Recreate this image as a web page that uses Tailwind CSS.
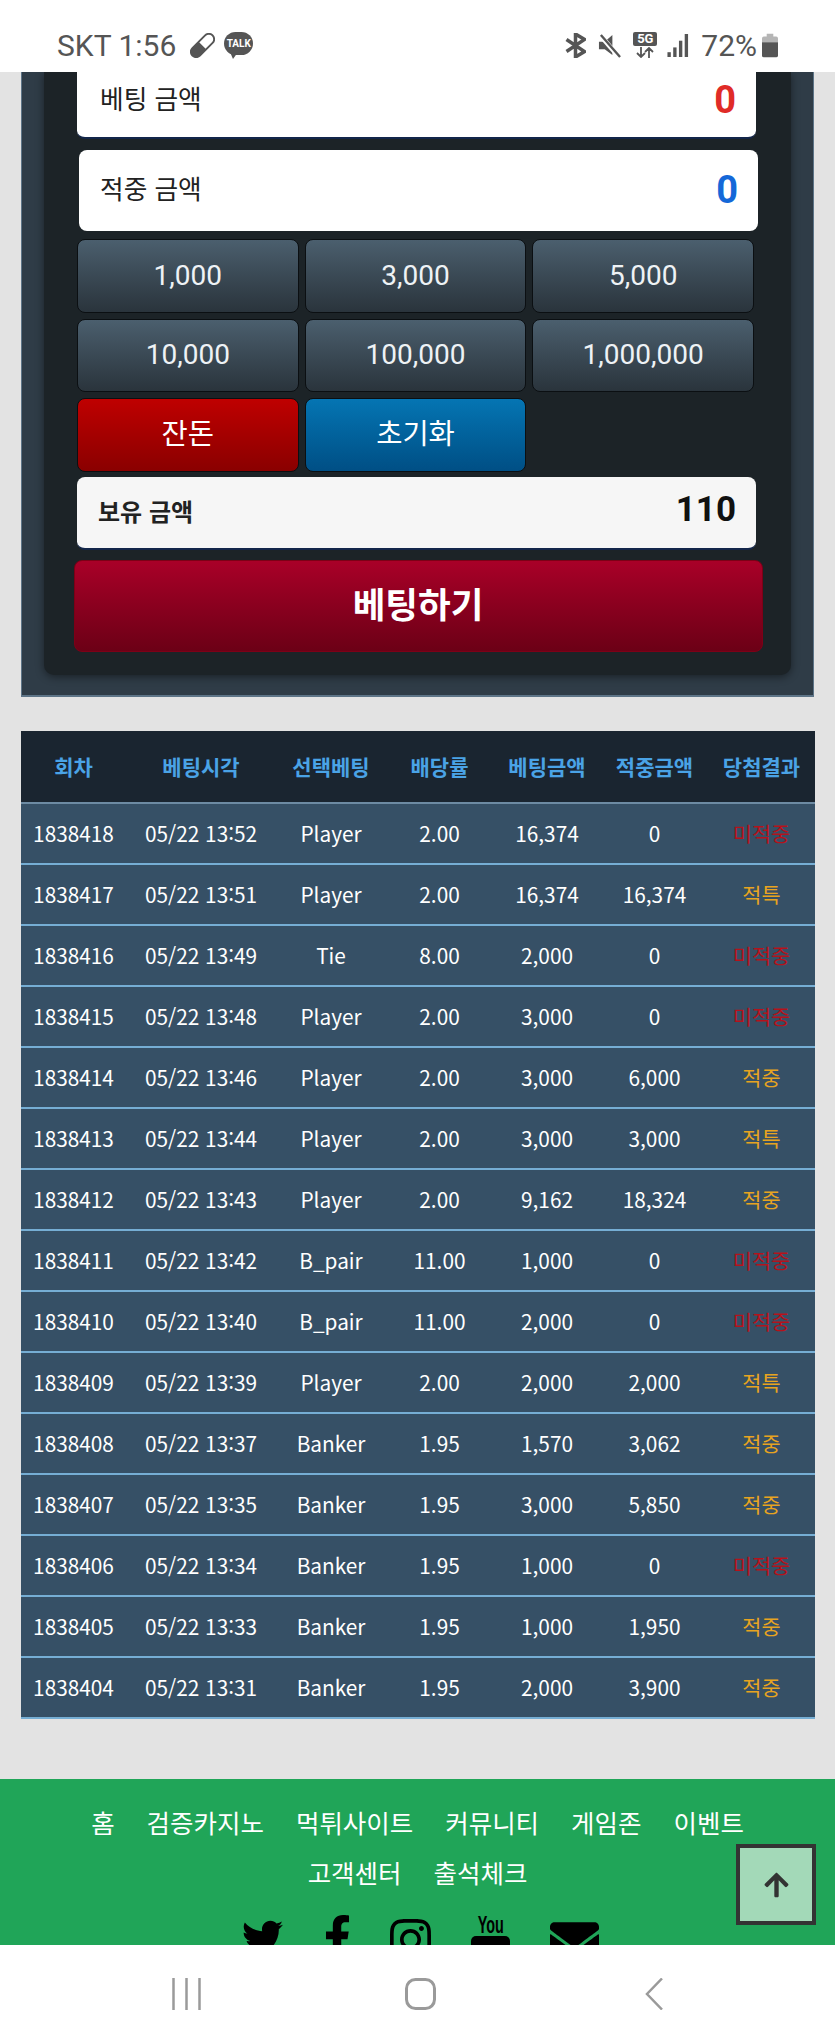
<!DOCTYPE html>
<html lang="ko">
  <head>
    <meta charset="UTF-8" />
    <meta name="viewport" content="width=device-width, initial-scale=1.0" />
    <title>베팅내역</title>
    <script src="https://cdn.jsdelivr.net/npm/@tailwindcss/browser@4"></script>
  </head>
  <body class="bg-[#e3e3e3] font-['Noto_Sans_CJK_KR','Noto_Sans',sans-serif]">
    <div class="relative w-[835px] h-[2042px] flex flex-col overflow-hidden">
      <!-- status bar -->
      <div class="h-[72px] shrink-0 bg-white flex items-center justify-between pl-[57px] pr-[57px] pt-[19px] text-[#555] font-['Roboto',sans-serif] text-[30px]">
        <div class="flex items-center">
          <span class="leading-none">SKT 1:56</span>
          <svg class="ml-[14px]" width="25" height="25" viewBox="0 0 26 26"><path d="M2.500 23.500a5.500 5.500 0 0 1 0-7.800L15.700 2.500a5.500 5.500 0 0 1 7.800 7.800L10.300 23.500a5.500 5.500 0 0 1-7.800 0z" fill="#fff" stroke="#555" stroke-width="2"/><path d="M2.500 23.500a5.500 5.500 0 0 1 0-7.800L9 9.200 16.800 17l-6.500 6.500a5.500 5.500 0 0 1-7.800 0z" fill="#555"/></svg>
          <div class="relative ml-[9px] w-[29px] h-[27px]">
            <div class="w-[29px] h-[23px] rounded-full bg-[#555] text-white text-[10px] leading-[23px] font-bold text-center">TALK</div>
            <div class="absolute left-[6px] top-[20px] w-0 h-0 border-l-[3px] border-r-[5px] border-t-[7px] border-l-transparent border-r-transparent border-t-[#555]"></div>
          </div>
        </div>
        <div class="flex items-center">
          <svg width="21" height="25" viewBox="0 0 21 25" fill="none" stroke="#555" stroke-width="3.500"><path d="M1.500 6.500l18 12-9 5.500V1l9 5.500-18 12"/></svg>
          <svg class="ml-[12px]" width="23" height="24" viewBox="0 0 24 25"><path d="M1 8h6l8-7v21l-8-6H1z" fill="#555"/><path d="M2 1l20 23" stroke="#fff" stroke-width="5"/><path d="M3 1l20 23" stroke="#555" stroke-width="2.500"/></svg>
          <div class="ml-[12px] w-[24px] flex flex-col items-center -mt-[2px]">
            <div class="w-[24px] h-[14px] rounded-[2px] bg-[#555] text-white text-[13px] leading-[14px] font-bold text-center">5G</div>
            <svg class="mt-[1px]" width="20" height="11" viewBox="0 0 20 11" fill="none" stroke="#555" stroke-width="1.800"><path d="M6 0v10M2 6l4 4 4-4M14 11V1M10 5l4-4 4 4"/></svg>
          </div>
          <svg class="ml-[10px]" width="22" height="23" viewBox="0 0 22 24" fill="#555"><rect x="0" y="19" width="3.500" height="5"/><rect x="6" y="14" width="3.500" height="10"/><rect x="12" y="7" width="3.500" height="17"/><rect x="18" y="0" width="3.500" height="24"/></svg>
          <span class="ml-[12px] leading-none">72%</span>
          <svg class="ml-[5px]" width="16" height="25" viewBox="0 0 17 25"><path d="M5 0h7v3h3a2 2 0 0 1 2 2v4H0V5a2 2 0 0 1 2-2h3z" fill="#b5b5b5"/><path d="M0 9h17v14a2 2 0 0 1-2 2H2a2 2 0 0 1-2-2z" fill="#555"/></svg>
        </div>
      </div>

      <main class="flex-1 min-h-0 flex flex-col overflow-hidden">
        <!-- bet panel -->
        <section class="mx-[21px] h-[625px] shrink-0 bg-[#2f3c47] border-x border-b-2 border-[#5d7487] px-[22px]">
          <div class="h-[603px] bg-[#1c2327] rounded-b-[10px] shadow-[0_2px_8px_rgba(0,0,0,0.45)] relative px-[33px]">
            <div class="w-[679px] h-[67px] bg-white rounded-b-[8px] border-b-2 border-[#13264a] flex items-center justify-between pl-[23px] pr-[20px] pb-[13px] text-[#222] text-[25.700px]">
              <span>베팅 금액</span>
              <span class="mt-[3px] text-[#e02b27] font-['Roboto',sans-serif] font-bold text-[38px] leading-none">0</span>
            </div>
            <div class="w-[679px] h-[81px] mt-[11px] ml-[2px] bg-white rounded-[8px] flex items-center justify-between pl-[21px] pr-[20px] pb-[4px] text-[#222] text-[25.700px]">
              <span>적중 금액</span>
              <span class="mt-[3px] text-[#1468d8] font-['Roboto',sans-serif] font-bold text-[38px] leading-none">0</span>
            </div>
            <div class="grid grid-cols-3 gap-[6px] w-[677px] mt-[8px] font-['Roboto',sans-serif] text-[28px] text-[#eef2f5]">
              <button class="h-[73.500px] rounded-[8px] border-[1.500px] border-[#0b0f12] bg-gradient-to-b from-[#4b5f6e] to-[#2a343c]">1,000</button>
              <button class="h-[73.500px] rounded-[8px] border-[1.500px] border-[#0b0f12] bg-gradient-to-b from-[#4b5f6e] to-[#2a343c]">3,000</button>
              <button class="h-[73.500px] rounded-[8px] border-[1.500px] border-[#0b0f12] bg-gradient-to-b from-[#4b5f6e] to-[#2a343c]">5,000</button>
              <button class="h-[73.500px] rounded-[8px] border-[1.500px] border-[#0b0f12] bg-gradient-to-b from-[#4b5f6e] to-[#2a343c]">10,000</button>
              <button class="h-[73.500px] rounded-[8px] border-[1.500px] border-[#0b0f12] bg-gradient-to-b from-[#4b5f6e] to-[#2a343c]">100,000</button>
              <button class="h-[73.500px] rounded-[8px] border-[1.500px] border-[#0b0f12] bg-gradient-to-b from-[#4b5f6e] to-[#2a343c]">1,000,000</button>
              <button class="h-[73.500px] pb-[5px] rounded-[8px] border-[1.500px] border-[#0b0f12] bg-gradient-to-b from-[#bf0000] to-[#8a0000] font-['Noto_Sans_CJK_KR',sans-serif] text-[28.500px] text-white">잔돈</button>
              <button class="h-[73.500px] pb-[5px] rounded-[8px] border-[1.500px] border-[#0b0f12] bg-gradient-to-b from-[#0575b3] to-[#004f85] font-['Noto_Sans_CJK_KR',sans-serif] text-[28.500px] text-white">초기화</button>
            </div>
            <div class="w-[679px] h-[73px] mt-[5px] bg-[#f6f6f6] rounded-[8px] border-b-2 border-[#13264a] flex items-center justify-between pl-[21px] pr-[20px] pb-[3px]">
              <span class="text-[#222] text-[24px] font-bold">보유 금액</span>
              <span class="mb-[2px] text-[#111] font-['Roboto',sans-serif] font-bold text-[35px] leading-none">110</span>
            </div>
            <button class="block -ml-[3.500px] w-[689px] h-[92px] mt-[10.500px] pb-[6px] rounded-[8px] border border-[#7d0016] bg-gradient-to-b from-[#a90028] to-[#6c0016] text-white font-bold text-[35.500px]">베팅하기</button>
          </div>
        </section>

        <!-- history table -->
        <table class="mt-[34px] ml-[21px] w-[794px] table-fixed shrink-0 text-center text-[20.800px] text-white">
          <colgroup>
            <col class="w-[105px]" /><col class="w-[150px]" /><col class="w-[110px]" /><col class="w-[107px]" /><col class="w-[108px]" /><col class="w-[107px]" /><col class="w-[107px]" />
          </colgroup>
          <thead class="bg-[#1a2530] text-[#4aa3e6] text-[21px]">
            <tr class="h-[72px] border-b-2 border-[#6d8ba3]">
              <th>회차</th><th>베팅시각</th><th>선택베팅</th><th>배당률</th><th>베팅금액</th><th>적중금액</th><th>당첨결과</th>
            </tr>
          </thead>
          <tbody class="bg-[#365066]">
            <tr class="h-[61px] border-b-2 border-[#76aed4]"><td>1838418</td><td>05/22 13:52</td><td>Player</td><td>2.00</td><td>16,374</td><td>0</td><td class="text-[#b5121b]">미적중</td></tr>
            <tr class="h-[61px] border-b-2 border-[#76aed4]"><td>1838417</td><td>05/22 13:51</td><td>Player</td><td>2.00</td><td>16,374</td><td>16,374</td><td class="text-[#e8a420]">적특</td></tr>
            <tr class="h-[61px] border-b-2 border-[#76aed4]"><td>1838416</td><td>05/22 13:49</td><td>Tie</td><td>8.00</td><td>2,000</td><td>0</td><td class="text-[#b5121b]">미적중</td></tr>
            <tr class="h-[61px] border-b-2 border-[#76aed4]"><td>1838415</td><td>05/22 13:48</td><td>Player</td><td>2.00</td><td>3,000</td><td>0</td><td class="text-[#b5121b]">미적중</td></tr>
            <tr class="h-[61px] border-b-2 border-[#76aed4]"><td>1838414</td><td>05/22 13:46</td><td>Player</td><td>2.00</td><td>3,000</td><td>6,000</td><td class="text-[#e8a420]">적중</td></tr>
            <tr class="h-[61px] border-b-2 border-[#76aed4]"><td>1838413</td><td>05/22 13:44</td><td>Player</td><td>2.00</td><td>3,000</td><td>3,000</td><td class="text-[#e8a420]">적특</td></tr>
            <tr class="h-[61px] border-b-2 border-[#76aed4]"><td>1838412</td><td>05/22 13:43</td><td>Player</td><td>2.00</td><td>9,162</td><td>18,324</td><td class="text-[#e8a420]">적중</td></tr>
            <tr class="h-[61px] border-b-2 border-[#76aed4]"><td>1838411</td><td>05/22 13:42</td><td>B_pair</td><td>11.00</td><td>1,000</td><td>0</td><td class="text-[#b5121b]">미적중</td></tr>
            <tr class="h-[61px] border-b-2 border-[#76aed4]"><td>1838410</td><td>05/22 13:40</td><td>B_pair</td><td>11.00</td><td>2,000</td><td>0</td><td class="text-[#b5121b]">미적중</td></tr>
            <tr class="h-[61px] border-b-2 border-[#76aed4]"><td>1838409</td><td>05/22 13:39</td><td>Player</td><td>2.00</td><td>2,000</td><td>2,000</td><td class="text-[#e8a420]">적특</td></tr>
            <tr class="h-[61px] border-b-2 border-[#76aed4]"><td>1838408</td><td>05/22 13:37</td><td>Banker</td><td>1.95</td><td>1,570</td><td>3,062</td><td class="text-[#e8a420]">적중</td></tr>
            <tr class="h-[61px] border-b-2 border-[#76aed4]"><td>1838407</td><td>05/22 13:35</td><td>Banker</td><td>1.95</td><td>3,000</td><td>5,850</td><td class="text-[#e8a420]">적중</td></tr>
            <tr class="h-[61px] border-b-2 border-[#76aed4]"><td>1838406</td><td>05/22 13:34</td><td>Banker</td><td>1.95</td><td>1,000</td><td>0</td><td class="text-[#b5121b]">미적중</td></tr>
            <tr class="h-[61px] border-b-2 border-[#76aed4]"><td>1838405</td><td>05/22 13:33</td><td>Banker</td><td>1.95</td><td>1,000</td><td>1,950</td><td class="text-[#e8a420]">적중</td></tr>
            <tr class="h-[61px] border-b-2 border-[#76aed4]"><td>1838404</td><td>05/22 13:31</td><td>Banker</td><td>1.95</td><td>2,000</td><td>3,900</td><td class="text-[#e8a420]">적중</td></tr>
          </tbody>
        </table>

        <!-- footer -->
        <footer class="mt-auto h-[166px] shrink-0 overflow-hidden bg-[#20a558] text-white text-[25.500px]">
          <div class="h-[118px] flex flex-wrap justify-center content-start gap-x-[32px] px-[80px] pt-[18px] leading-[50px]">
            <a>홈</a><a>검증카지노</a><a>먹튀사이트</a><a>커뮤니티</a><a>게임존</a><a>이벤트</a><a>고객센터</a><a>출석체크</a>
          </div>
          <div class="flex items-start pl-[242px] mt-[21px]">
            <svg class="mt-[-1px]" width="41" height="41" viewBox="0 0 512 512"><path d="M459.370 151.716c.325 4.548.325 9.097.325 13.645 0 138.720-105.583 298.558-298.558 298.558-59.452 0-114.680-17.219-161.137-47.106 8.447.974 16.568 1.299 25.340 1.299 49.055 0 94.213-16.568 130.274-44.832-46.132-.975-84.792-31.188-98.112-72.772 6.498.974 12.995 1.624 19.818 1.624 9.421 0 18.843-1.300 27.614-3.573-48.081-9.747-84.143-51.980-84.143-102.985v-1.299c13.969 7.797 30.214 12.670 47.431 13.319-28.264-18.843-46.781-51.005-46.781-87.391 0-19.492 5.197-37.360 14.294-52.954 51.655 63.675 129.300 105.258 216.365 109.807-1.624-7.797-2.599-15.918-2.599-24.040 0-57.828 46.782-104.934 104.934-104.934 30.213 0 57.502 12.670 76.670 33.137 23.715-4.548 46.456-13.320 66.599-25.340-7.798 24.366-24.366 44.833-46.132 57.827 21.117-2.273 41.584-8.122 60.426-16.243-14.292 20.791-32.161 39.308-52.628 54.253z"/></svg>
            <svg class="ml-[41px] mt-[-3px]" width="27" height="43" viewBox="0 0 320 512"><path d="M279.140 288l14.220-92.660h-88.910v-60.130c0-25.350 12.420-50.060 52.240-50.060h40.420V6.260S260.430 0 225.360 0c-73.220 0-121.080 44.380-121.080 124.720v70.620H22.890V288h81.390v224h100.170V288z"/></svg>
            <svg class="ml-[39px] mt-[-2px]" width="41" height="47" viewBox="0 0 448 512"><path d="M224.100 141c-63.600 0-114.900 51.300-114.900 114.900s51.300 114.900 114.900 114.900S339 319.500 339 255.900 287.700 141 224.100 141zm0 189.600c-41.100 0-74.700-33.500-74.700-74.700s33.500-74.700 74.700-74.700 74.700 33.500 74.700 74.700-33.600 74.700-74.700 74.700zm146.400-194.300c0 14.900-12 26.800-26.800 26.800-14.900 0-26.800-12-26.800-26.800s12-26.800 26.800-26.800 26.800 12 26.800 26.800zm76.100 27.200c-1.700-35.900-9.900-67.700-36.200-93.900-26.200-26.200-58-34.400-93.900-36.200-37-2.100-147.900-2.100-184.900 0-35.800 1.700-67.600 9.900-93.900 36.100s-34.400 58-36.200 93.900c-2.100 37-2.100 147.900 0 184.900 1.700 35.900 9.900 67.700 36.200 93.900s58 34.400 93.900 36.200c37 2.100 147.900 2.100 184.900 0 35.900-1.700 67.700-9.900 93.900-36.200 26.200-26.200 34.400-58 36.200-93.900 2.100-37 2.100-147.800 0-184.800zM398.800 388c-7.800 19.600-22.900 34.700-42.600 42.600-29.500 11.700-99.500 9-132.100 9s-102.700 2.600-132.100-9c-19.600-7.800-34.700-22.900-42.600-42.600-11.700-29.500-9-99.500-9-132.100s-2.600-102.700 9-132.100c7.800-19.600 22.900-34.700 42.600-42.600 29.500-11.700 99.500-9 132.100-9s102.700-2.600 132.100 9c19.600 7.800 34.700 22.900 42.600 42.600 11.700 29.500 9 99.500 9 132.100s2.700 102.700-9 132.100z"/></svg>
            <div class="ml-[40px] mt-[-3px] w-[39px] text-black flex flex-col items-center font-['Liberation_Sans',sans-serif] font-bold">
              <span class="text-[24px] leading-[20px] scale-x-[0.6]">You</span>
              <div class="w-[39px] h-[20px] mt-[1px] bg-black rounded-[5px]"></div>
            </div>
            <svg class="ml-[40px] mt-[-2px]" width="49" height="49" viewBox="0 0 512 512"><path d="M502.300 190.800c3.900-3.100 9.700-.2 9.700 4.700V400c0 26.500-21.500 48-48 48H48c-26.500 0-48-21.500-48-48V195.600c0-5 5.700-7.800 9.700-4.700 22.400 17.400 52.100 39.500 154.100 113.600 21.100 15.400 56.700 47.800 92.200 47.600 35.700.3 72-32.800 92.300-47.600 102-74.100 131.600-96.300 154-113.700zM256 320c23.200.4 56.600-29.200 73.400-41.400 132.700-96.300 142.800-104.700 173.400-128.700 5.800-4.500 9.200-11.500 9.200-18.900v-19c0-26.500-21.500-48-48-48H48C21.500 64 0 85.500 0 112v19c0 7.400 3.400 14.300 9.200 18.900 30.600 23.900 40.700 32.400 173.400 128.700 16.800 12.200 50.200 41.800 73.400 41.400z"/></svg>
          </div>
        </footer>
      </main>

      <!-- nav bar -->
      <div class="h-[97px] shrink-0 bg-white flex items-start pt-[33px] pl-[172px]">
        <svg width="29" height="32" viewBox="0 0 29 32" fill="none" stroke="#9a9a9a" stroke-width="2.500"><path d="M1.500 0v32M14.500 0v32M27.500 0v32"/></svg>
        <svg class="ml-[204px]" width="31" height="32" viewBox="0 0 31 32" fill="none" stroke="#9a9a9a" stroke-width="3"><rect x="1.500" y="1.500" width="28" height="29" rx="9"/></svg>
        <svg class="ml-[209px]" width="18" height="32" viewBox="0 0 18 32" fill="none" stroke="#9a9a9a" stroke-width="2.500"><path d="M17 0.500L2 16l15 15.500"/></svg>
      </div>

      <!-- back to top -->
      <div class="absolute left-[736px] top-[1844px] w-[80px] h-[81px] border-[4px] border-[#333] bg-[#a3d9b8] flex items-center justify-center">
        <svg width="27" height="28" viewBox="0 0 448 512" fill="#333"><path d="M34.900 289.500l-22.200-22.200c-9.400-9.400-9.400-24.600 0-33.900L207 39c9.400-9.400 24.600-9.400 33.900 0l194.300 194.300c9.400 9.400 9.400 24.600 0 33.900L413 289.400c-9.500 9.500-25 9.300-34.300-.4L264 168.600V456c0 13.300-10.700 24-24 24h-32c-13.300 0-24-10.700-24-24V168.600L69.200 289.100c-9.300 9.800-24.800 10-34.300.4z"/></svg>
      </div>
    </div>
  </body>
</html>
